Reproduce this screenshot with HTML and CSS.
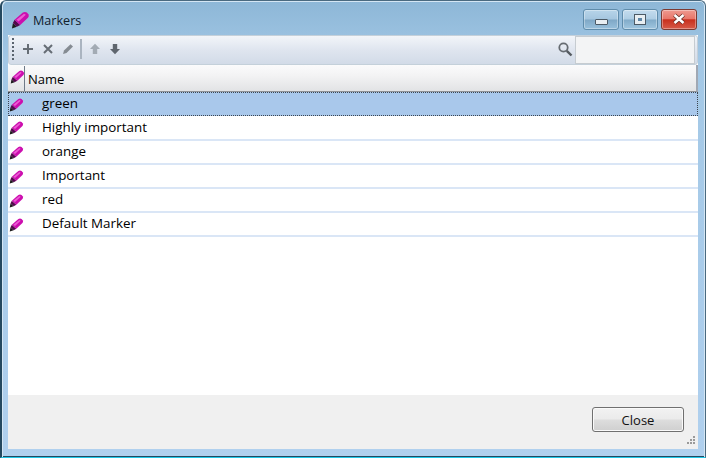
FILE: index.html
```html
<!DOCTYPE html>
<html>
<head>
<meta charset="utf-8">
<title>Markers</title>
<link rel="stylesheet" href="styles.css">
</head>
<body>
<svg class="defs" width="0" height="0">
  <defs>
    <symbol id="marker" viewBox="0 0 16 16">
      <path d="M0.8 15.5 L1.6 11 L5 14.2 Z" fill="#1c1c1c"/>
      <path d="M1.6 11 L3 8.2 L7.8 12.6 L5 14.2 Z" fill="#55084e"/>
      <path d="M3 8.2 L10 2.2 Q11.8 1.2 13.4 2.2 L14.8 3.8 Q15.4 5.4 14.3 6.5 L7.8 12.6 Z" fill="#cc0eae"/>
      <path d="M4.6 8.2 L11 3.2 L12.5 4 L6.4 9.6 Z" fill="#ec5cd4"/>
    </symbol>
  </defs>
</svg>
<div class="window">
  <header class="titlebar">
    <svg class="title-icon"><use href="#marker"/></svg>
    <span class="title">Markers</span>
    <div class="controls">
      <div class="ctl ctl-min"><span class="min-glyph"></span></div>
      <div class="ctl ctl-max"><span class="max-glyph"></span></div>
      <div class="ctl ctl-close">
        <svg width="16" height="12" viewBox="0 0 16 12"><path d="M3.5 2 L12.5 10 M12.5 2 L3.5 10" stroke="#5c2a22" stroke-width="4"/><path d="M3.5 2 L12.5 10 M12.5 2 L3.5 10" stroke="#fff" stroke-width="2.6"/></svg>
      </div>
    </div>
  </header>
  <div class="client">
    <div class="toolbar">
      <span class="grip"></span>
      <svg class="tool" viewBox="0 0 12 12"><path d="M6 1 V11 M1 6 H11" stroke="#666d75" stroke-width="2"/></svg>
      <svg class="tool" viewBox="0 0 12 12"><path d="M2 2 L10 10 M10 2 L2 10" stroke="#666d75" stroke-width="2"/></svg>
      <svg class="tool" viewBox="0 0 12 12"><path d="M1 11 L2 7.5 L8.5 1.2 L11 3.5 L4.5 10 Z" fill="#858b92"/></svg>
      <span class="sep"></span>
      <svg class="tool" viewBox="0 0 12 12"><path d="M6 .8 L11 6 H8.2 V11 H3.8 V6 H1 Z" fill="#a3abb4"/></svg>
      <svg class="tool" viewBox="0 0 12 12"><path d="M6 11.2 L11 6 H8.2 V1 H3.8 V6 H1 Z" fill="#5f666e"/></svg>
      <span class="spacer"></span>
      <svg class="search-icon" viewBox="0 0 16 16"><circle cx="6.5" cy="6.5" r="4.2" fill="none" stroke="#666c72" stroke-width="1.8"/><path d="M9.8 9.8 L14.5 14.5" stroke="#555b60" stroke-width="2.4"/></svg>
      <div class="search-box"></div>
    </div>
    <div class="list-header">
      <div class="head-icon"><svg class="row-icon"><use href="#marker"/></svg></div>
      <div class="head-name">Name</div>
    </div>
    <ul class="rows">
      <li class="row selected"><svg class="row-icon"><use href="#marker"/></svg><span>green</span></li>
      <li class="row"><svg class="row-icon"><use href="#marker"/></svg><span>Highly important</span></li>
      <li class="row"><svg class="row-icon"><use href="#marker"/></svg><span>orange</span></li>
      <li class="row"><svg class="row-icon"><use href="#marker"/></svg><span>Important</span></li>
      <li class="row"><svg class="row-icon"><use href="#marker"/></svg><span>red</span></li>
      <li class="row"><svg class="row-icon"><use href="#marker"/></svg><span>Default Marker</span></li>
    </ul>
    <footer class="footer">
      <button class="close-btn">Close</button>
      <svg class="size-grip" viewBox="0 0 12 12"><g fill="#9a9a9a"><rect x="9" y="1" width="2" height="2"/><rect x="6" y="4" width="2" height="2"/><rect x="9" y="4" width="2" height="2"/><rect x="3" y="7" width="2" height="2"/><rect x="6" y="7" width="2" height="2"/><rect x="9" y="7" width="2" height="2"/></g></svg>
    </footer>
  </div>
</div>
</body>
</html>
```
FILE: styles.css
```css
* { box-sizing: border-box; }
html, body { margin: 0; padding: 0; height: 100%; }
body { font-family: "Open Sans", "Noto Sans", sans-serif; font-size: 13.4px; color: #000; background: #fff; overflow: hidden; }
.defs { position: absolute; }
.window {
  width: 706px; height: 458px; display: flex; flex-direction: column;
  background: linear-gradient(180deg, #8db7d7 0, #a3c8e6 60px, #b0d0ee 100%);
  border: 1px solid #4a6a80; border-left: 2px solid #24485f; border-bottom: 1px solid #20c8e8; border-radius: 6px 6px 0 0;
  padding: 0 7px 8px 6px;
  box-shadow: inset 1px 1px 0 #d4e6f4, inset -1px 0 0 #d4e6f4, inset 0 -1px 0 #24485f;
}
.titlebar { height: 34px; display: flex; align-items: center; flex: none; padding-top: 4px; }
.title-icon { width: 19px; height: 19px; margin: -2px 3px 0 3px; }
.title { font-size: 12.6px; color: #10202c; }
.controls { margin-left: auto; display: flex; gap: 3px; margin-right: 1px; margin-top: -2px; }
.ctl { width: 36px; height: 21px; border-radius: 3px; border: 1px solid #5f8cab; display: flex; align-items: center; justify-content: center;
  background: linear-gradient(180deg, #b7d4e9 0, #a5c6df 48%, #7fa8c6 52%, #98c0dc 100%); box-shadow: inset 0 0 0 1px rgba(255,255,255,.35); }
.ctl-max { background: linear-gradient(180deg, #c4dcee 0, #aecde4 48%, #81abc9 52%, #a0c6e0 100%); }
.ctl-close { border-color: #7c3a32; background: linear-gradient(180deg, #ee9a90 0, #e8776a 45%, #c8301e 52%, #d65a48 100%); }
.min-glyph { width: 13px; height: 6px; margin-top: 5px; background: #e8eef2; border: 1px solid #4c5a66; border-radius: 1px; }
.max-glyph { width: 10px; height: 9px; border: 3px solid #e8eef2; outline: 1px solid #4c5a66; background: #5e86a6; }
.client { flex: 1; display: flex; flex-direction: column; background: #fff; min-height: 0; }
.toolbar { height: 30px; flex: none; display: flex; align-items: center; padding: 0 2px 2px 3px;
  border: 1px solid #c4d0da; border-radius: 3px;
  background: linear-gradient(180deg, #f2f5f9 0, #dfe5ef 50%, #d2dbe8 100%); }
.grip { width: 2px; height: 22px; margin-right: 4px; background: repeating-linear-gradient(180deg, #59636e 0 2px, transparent 2px 4px); }
.tool { width: 12px; height: 12px; margin: 0 4px; flex: none; }
.sep { width: 2px; height: 20px; background: #aab4c0; margin: 0 3px 0 2px; }
.spacer { flex: 1; }
.search-icon { width: 16px; height: 16px; margin-right: 2px; }
.search-box { width: 120px; height: 28px; margin-bottom: -2px; background: #f3f4f5; border: 1px solid #c6ccd1; }
.list-header { height: 27px; flex: none; display: flex; align-items: center; padding-top: 1px;
  background: linear-gradient(180deg, #fbfbfc 0, #f3f3f4 40%, #e2e3e5 100%); border-bottom: 1px solid #8f9195; border-right: 2px solid #a0a8b4; }
.head-icon { width: 17px; height: 100%; padding: 3px 0 0 2px; border-right: 1px solid #6f7a88; flex: none; }
.head-name { padding-left: 3px; font-size: 13px; }
.rows { list-style: none; margin: 0; padding: 0; flex: 1; }
.row { height: 24px; display: flex; align-items: center; padding-left: 1px; border-bottom: 2px solid #dae6f6; }
.row span { margin-left: 18px; position: relative; top: -1px; }
.row-icon { width: 15px; height: 15px; flex: none; display: block; }
.row.selected { background: #a9c8eb; border: 1px dotted #3c4650; padding-left: 0; }
.selected + .row { height: 25px; }
.footer { height: 54px; flex: none; background: #f0f0f0; position: relative; display: flex; justify-content: flex-end; align-items: flex-start; padding: 12px 14px 0 0; }
.close-btn { width: 92px; height: 25px; font: inherit; font-size: 13px; color: #111; border: 1px solid #707070; border-radius: 3px;
  background: linear-gradient(180deg, #f2f2f2 0, #ebebeb 48%, #dddddd 52%, #cfcfcf 100%); box-shadow: inset 0 0 0 1px #fafafa; padding: 0; }
.size-grip { position: absolute; right: 2px; bottom: 2px; width: 12px; height: 12px; }
```
